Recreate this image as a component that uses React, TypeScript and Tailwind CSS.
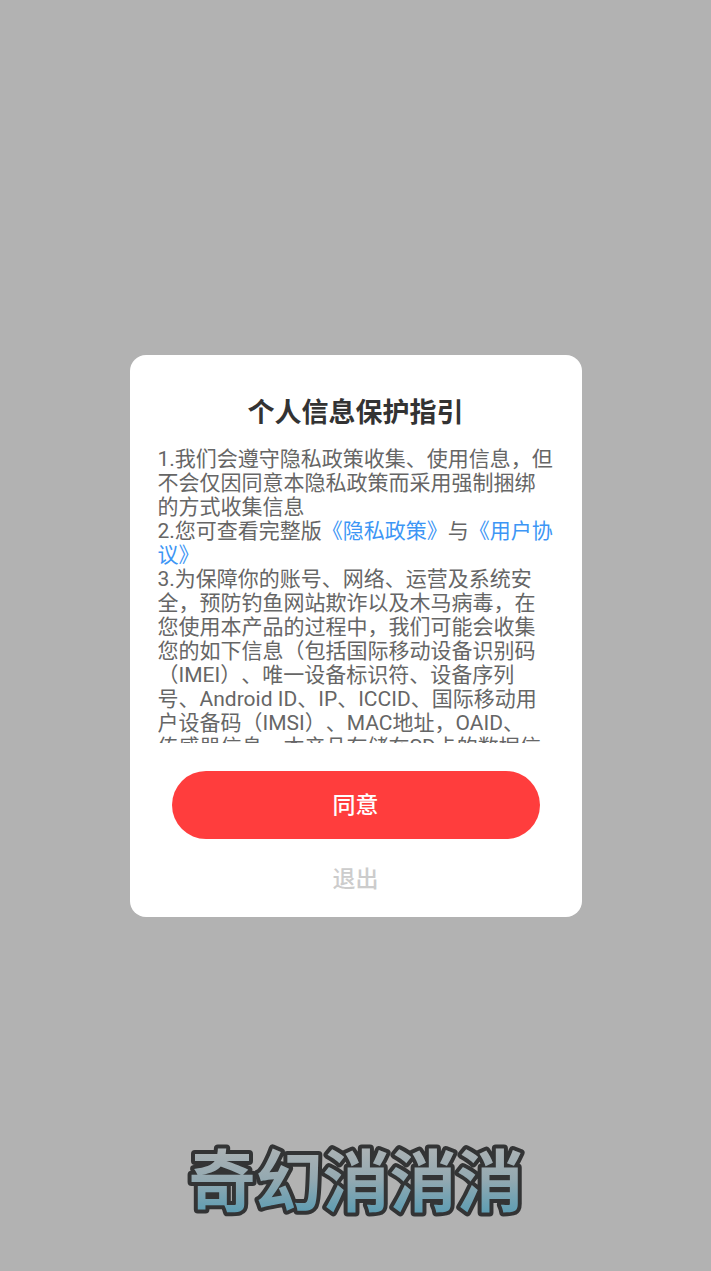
import type { ReactElement } from "react";

const linkClass = "text-[#3d96f5]";

function GameLogo(): ReactElement {
  return (
    <svg
      role="img"
      aria-label="奇幻消消消"
      viewBox="0 0 350 84"
      className="h-[84px] w-[350px] max-w-full overflow-visible"
    >
      <defs>
        <linearGradient id="logo-fill" gradientUnits="userSpaceOnUse" x1="0" y1="12" x2="0" y2="74">
          <stop offset="0" stopColor="#a9b1b4" />
          <stop offset="0.45" stopColor="#94a9b1" />
          <stop offset="1" stopColor="#5d9db3" />
        </linearGradient>
      </defs>
      <text
        x="175"
        y="67"
        textAnchor="middle"
        fill="url(#logo-fill)"
        stroke="#333435"
        strokeWidth="8"
        strokeLinejoin="round"
        paintOrder="stroke"
        className="font-['Noto_Sans_CJK_SC',sans-serif] text-[67px] font-bold"
      >
        奇幻消消消
      </text>
    </svg>
  );
}

function PrivacyDialog(): ReactElement {
  return (
    <section
      role="dialog"
      aria-labelledby="privacy-title"
      className="w-full max-w-[452px] rounded-2xl bg-white px-7 pt-10 pb-3.5"
    >
      <h1
        id="privacy-title"
        className="text-center text-[27px] leading-9 font-bold text-[#333333]"
      >
        个人信息保护指引
      </h1>

      <div className="mt-4 h-[296px] overflow-y-auto text-[21px] leading-6 text-[#666666] [scrollbar-width:none] [text-spacing-trim:space-all]">
        <p>1.我们会遵守隐私政策收集、使用信息，但不会仅因同意本隐私政策而采用强制捆绑的方式收集信息</p>
        <p>
          2.您可查看完整版
          <a href="#privacy" className={linkClass}>
            《隐私政策》
          </a>
          与
          <a href="#agreement" className={linkClass}>
            《用户协议》
          </a>
        </p>
        <p>
          3.为保障你的账号、网络、运营及系统安全，预防钓鱼网站欺诈以及木马病毒，在您使用本产品的过程中，我们可能会收集您的如下信息（包括国际移动设备识别码（IMEI）、唯一设备标识符、设备序列号、Android
          ID、IP、ICCID、国际移动用户设备码（IMSI）、MAC地址，OAID、
          <br />
          传感器信息，本产品存储在SD卡的数据信
        </p>
      </div>

      <div className="mt-7 flex flex-col items-center px-3.5">
        <button
          type="button"
          className="h-[68px] w-full rounded-full bg-[#ff3d3d] pt-1 text-[23px] font-medium text-white"
        >
          同意
        </button>
        <button type="button" className="mt-4 h-12 px-8 pt-1 text-[23px] font-medium text-[#cccccc]">
          退出
        </button>
      </div>
    </section>
  );
}

export default function App(): ReactElement {
  return (
    <main className="grid min-h-screen grid-rows-[1fr_auto_1fr] justify-items-center bg-[#b2b2b2] px-4 font-[Roboto,'Noto_Sans_CJK_SC',sans-serif]">
      <div className="row-start-2 flex w-full justify-center">
        <PrivacyDialog />
      </div>
      <div className="row-start-3 self-end pb-12">
        <GameLogo />
      </div>
    </main>
  );
}
